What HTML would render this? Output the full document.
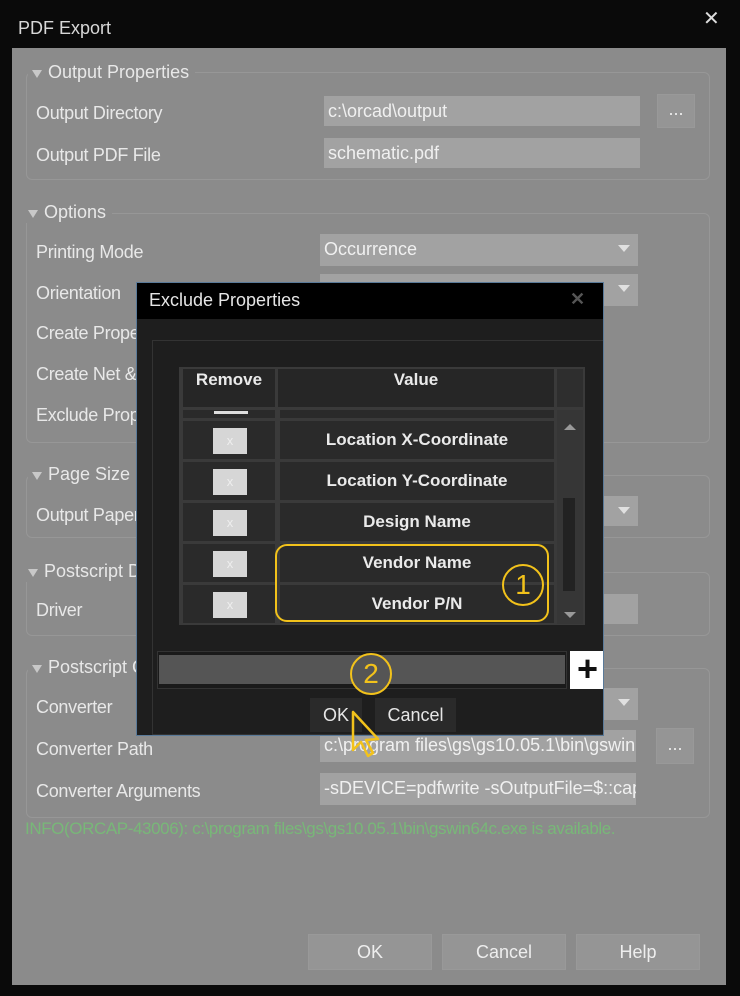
<!DOCTYPE html>
<html><head><meta charset="utf-8"><style>
*{box-sizing:border-box;margin:0;padding:0}
body{width:740px;height:996px;background:#0a0a0a;position:relative;overflow:hidden;font-family:"Liberation Sans",sans-serif}
.a{position:absolute}
.main{left:12px;top:48px;width:714px;height:937px;background:#8b8b8b}
.lbl{position:absolute;color:#e8e8e8;font-size:18px;letter-spacing:-0.3px}
.grp{position:absolute;border:1.5px solid #979797;border-radius:6px}
.gt{position:absolute;background:#8b8b8b;color:#e8e8e8;font-size:18px;padding:0 6px 0 20px;line-height:22px}
.gt:before{content:"";position:absolute;left:4px;top:9px;width:0;height:0;border-left:5px solid transparent;border-right:5px solid transparent;border-top:8px solid #c8c8c8}
.fld{position:absolute;background:#a2a2a2;color:#f0f0f0;font-size:18px;padding:0 4px;white-space:nowrap;overflow:hidden;line-height:30px}
.dd:after{content:"";position:absolute;right:8px;top:11px;border-left:6px solid transparent;border-right:6px solid transparent;border-top:7px solid #e0e0e0}
.btn{position:absolute;background:#959595;border:1px solid #999;color:#eee;font-size:18px;text-align:center}
.dlg{left:136px;top:282px;width:468px;height:454px;background:#1e1e1e;border:1px solid #5a7a99;overflow:hidden}
.cell{position:absolute;background:#2a2a2a;color:#eaeaea;font-size:17px;text-align:center;font-weight:bold}
.xb{position:absolute;left:30px;top:7px;width:34px;height:26px;background:#d6d6d6;color:#eee;font-size:13px;text-align:center;line-height:26px;font-weight:normal}
</style></head><body>
<div class="a main"></div>
<div class="a" style="left:18px;top:18px;color:#d8d8d8;font-size:18px">PDF Export</div>
<div class="a" style="left:703px;top:6px;color:#ddd;font-size:20px">✕</div>

<div class="grp" style="left:26px;top:72px;width:684px;height:108px"></div>
<div class="gt" style="left:28px;top:61px">Output Properties</div>
<div class="lbl" style="left:36px;top:103px">Output Directory</div>
<div class="lbl" style="left:36px;top:145px">Output PDF File</div>
<div class="fld" style="left:324px;top:96px;width:316px;height:30px">c:\orcad\output</div>
<div class="fld" style="left:324px;top:138px;width:316px;height:30px">schematic.pdf</div>
<div class="btn" style="left:657px;top:94px;width:38px;height:34px;line-height:28px">...</div>

<div class="grp" style="left:26px;top:213px;width:684px;height:230px"></div>
<div class="gt" style="left:24px;top:201px">Options</div>
<div class="lbl" style="left:36px;top:242px">Printing Mode</div>
<div class="lbl" style="left:36px;top:283px">Orientation</div>
<div class="lbl" style="left:36px;top:323px">Create Properties</div>
<div class="lbl" style="left:36px;top:364px">Create Net &amp;</div>
<div class="lbl" style="left:36px;top:405px">Exclude Properties</div>
<div class="fld dd" style="left:320px;top:234px;width:318px;height:32px">Occurrence</div>
<div class="fld dd" style="left:320px;top:274px;width:318px;height:32px"></div>

<div class="grp" style="left:26px;top:475px;width:684px;height:63px"></div>
<div class="gt" style="left:28px;top:463px">Page Size</div>
<div class="lbl" style="left:36px;top:505px">Output Paper</div>
<div class="fld dd" style="left:320px;top:496px;width:318px;height:30px"></div>

<div class="grp" style="left:26px;top:572px;width:684px;height:64px"></div>
<div class="gt" style="left:24px;top:560px">Postscript Driver</div>
<div class="lbl" style="left:36px;top:600px">Driver</div>
<div class="fld" style="left:320px;top:594px;width:318px;height:30px"></div>

<div class="grp" style="left:26px;top:668px;width:684px;height:150px"></div>
<div class="gt" style="left:28px;top:656px">Postscript Converter</div>
<div class="lbl" style="left:36px;top:697px">Converter</div>
<div class="lbl" style="left:36px;top:739px">Converter Path</div>
<div class="lbl" style="left:36px;top:781px">Converter Arguments</div>
<div class="fld dd" style="left:320px;top:688px;width:318px;height:32px"></div>
<div class="fld" style="left:320px;top:730px;width:316px;height:32px">c:\program files\gs\gs10.05.1\bin\gswin64c.exe</div>
<div class="fld" style="left:320px;top:773px;width:316px;height:32px">-sDEVICE=pdfwrite -sOutputFile=$::capture</div>
<div class="btn" style="left:656px;top:728px;width:38px;height:36px;line-height:30px">...</div>
<div class="a" style="left:25px;top:819px;color:#78b878;font-size:17px;letter-spacing:-0.4px">INFO(ORCAP-43006): c:\program files\gs\gs10.05.1\bin\gswin64c.exe is available.</div>

<div class="btn" style="left:308px;top:934px;width:124px;height:36px;line-height:34px">OK</div>
<div class="btn" style="left:442px;top:934px;width:124px;height:36px;line-height:34px">Cancel</div>
<div class="btn" style="left:576px;top:934px;width:124px;height:36px;line-height:34px">Help</div>

<div class="a dlg">
 <div class="a" style="left:0;top:0;width:466px;height:36px;background:#000"></div>
 <div class="a" style="left:12px;top:7px;color:#e6e6e6;font-size:18px">Exclude Properties</div>
 <div class="a" style="left:433px;top:6px;color:#555;font-size:18px;font-weight:bold">✕</div>
 <div class="a" style="left:15px;top:57px;width:470px;height:395px;border:1.5px solid #333"></div>
 <div class="a" style="left:42px;top:84px;width:406px;height:258px;background:#3a3a3a;border:1px solid #3a3a3a"></div>
 <div class="cell" style="left:46px;top:86px;width:92px;height:38px;line-height:22px;background:#262626">Remove</div>
 <div class="cell" style="left:141px;top:86px;width:276px;height:38px;line-height:22px;background:#262626">Value</div>
 <div class="a" style="left:420px;top:86px;width:26px;height:38px;background:#2e2e2e"></div>
 <div class="a" style="left:46px;top:127px;width:92px;height:8px;background:#2a2a2a"></div>
 <div class="a" style="left:77px;top:128px;width:34px;height:3px;background:#ddd"></div>
 <div class="a" style="left:143px;top:127px;width:274px;height:8px;background:#2a2a2a"></div>

 <div class="cell" style="left:46px;top:138px;width:92px;height:38px"><div class="xb">x</div></div>
 <div class="cell" style="left:143px;top:138px;width:274px;height:38px;line-height:38px">Location X-Coordinate</div>
 <div class="cell" style="left:46px;top:179px;width:92px;height:38px"><div class="xb">x</div></div>
 <div class="cell" style="left:143px;top:179px;width:274px;height:38px;line-height:38px">Location Y-Coordinate</div>
 <div class="cell" style="left:46px;top:220px;width:92px;height:38px"><div class="xb">x</div></div>
 <div class="cell" style="left:143px;top:220px;width:274px;height:38px;line-height:38px">Design Name</div>
 <div class="cell" style="left:46px;top:261px;width:92px;height:38px"><div class="xb">x</div></div>
 <div class="cell" style="left:143px;top:261px;width:274px;height:38px;line-height:38px">Vendor Name</div>
 <div class="cell" style="left:46px;top:302px;width:92px;height:38px"><div class="xb">x</div></div>
 <div class="cell" style="left:143px;top:302px;width:274px;height:38px;line-height:38px">Vendor P/N</div>
 <div class="a" style="left:420px;top:127px;width:26px;height:214px;background:#363636"></div>
 <div class="a" style="left:427px;top:141px;border-left:6px solid transparent;border-right:6px solid transparent;border-bottom:6px solid #999"></div>
 <div class="a" style="left:426px;top:215px;width:12px;height:93px;background:#222"></div>
 <div class="a" style="left:427px;top:329px;border-left:6px solid transparent;border-right:6px solid transparent;border-top:6px solid #999"></div>

 <div class="a" style="left:138px;top:261px;width:274px;height:78px;border:2.5px solid #f2c21b;border-radius:12px"></div>
 <div class="a" style="left:365px;top:281px;width:42px;height:42px;border:2.5px solid #f2c21b;border-radius:50%;color:#f2c21b;font-size:28px;text-align:center;line-height:37px">1</div>

 <div class="a" style="left:20px;top:368px;width:410px;height:38px;background:#1a1a1a;border:1px solid #333"></div>
 <div class="a" style="left:22px;top:372px;width:406px;height:29px;background:#555"></div>
 <div class="a" style="left:433px;top:368px;width:35px;height:38px;background:#fff;color:#111;font-size:36px;font-weight:bold;text-align:center;line-height:36px">+</div>
 <div class="a" style="left:213px;top:370px;width:42px;height:42px;border:2.5px solid #f2c21b;border-radius:50%;color:#f2c21b;font-size:28px;text-align:center;line-height:37px;background:#555">2</div>

 <div class="a" style="left:173px;top:415px;width:52px;height:34px;background:#2a2a2a;color:#e6e6e6;font-size:18px;text-align:center;line-height:34px">OK</div>
 <div class="a" style="left:238px;top:415px;width:81px;height:34px;background:#2a2a2a;color:#e6e6e6;font-size:18px;text-align:center;line-height:34px">Cancel</div>
</div>
<svg class="a" style="left:348px;top:710px" width="40" height="48" viewBox="0 0 40 48"><path d="M5 2 L5 40 L13 32 L20 46 L25 43 L18 30 L30 29 Z" fill="none" stroke="#f2c21b" stroke-width="2.5" stroke-linejoin="round"/></svg>
</body></html>
